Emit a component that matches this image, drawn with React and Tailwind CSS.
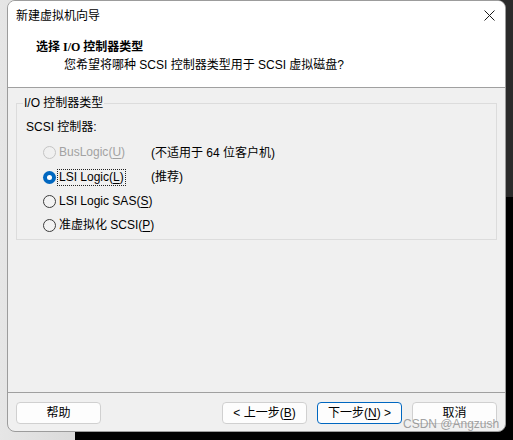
import React from "react";

const FONT = { fontFamily: '"Liberation Sans", "Noto Sans CJK SC", sans-serif' };

function Radio({ state }) {
  if (state === "checked") {
    return (
      <span className="flex h-[13px] w-[13px] shrink-0 items-center justify-center rounded-full bg-[#0067c0]">
        <span className="h-[5px] w-[5px] rounded-full bg-white" />
      </span>
    );
  }
  if (state === "disabled") {
    return <span className="h-[13px] w-[13px] shrink-0 rounded-full border border-[#c4c4c4] bg-[#f0f0f0]" />;
  }
  return <span className="h-[13px] w-[13px] shrink-0 rounded-full border border-[#3c3c3c] bg-[#f3f3f3]" />;
}

function Row({ state, label, mn, note, focus, h }) {
  const disabled = state === "disabled";
  return (
    <div className={`flex items-center whitespace-nowrap pl-[26px] ${h}`}>
      <Radio state={state} />
      <div className="ml-[1px] flex w-[94px] shrink-0 items-center">
        <span
          className={`whitespace-nowrap px-[2px] leading-[17px] ${disabled ? "text-[#a2a2a2]" : "text-black"} ${
            focus ? "outline outline-1 outline-dotted outline-[#222] -outline-offset-1" : ""
          }`}
        >
          {label}(<span className="underline underline-offset-2">{mn}</span>)
        </span>
      </div>
      {note && <span className="whitespace-nowrap text-black">{note}</span>}
    </div>
  );
}

function Btn({ children, primary }) {
  return (
    <div
      className={`flex h-[22px] w-[85px] items-center justify-center whitespace-nowrap rounded-[4px] border bg-[#fdfdfd] text-[12px] text-black ${
        primary ? "border-[#0067c0]" : "border-[#d0d0d0]"
      }`}
    >
      {children}
    </div>
  );
}

export default function App() {
  return (
    <div className="relative h-[440px] w-[513px] overflow-hidden bg-black text-[12px]" style={FONT}>
      {/* desktop background */}
      <div className="absolute left-0 top-0 h-[440px] w-[75px] bg-gradient-to-r from-[#e6e6e6] to-[#dadada]" />
      <div className="absolute right-0 top-0 h-[197px] w-[12px] bg-[#2b2b2b]" />

      {/* dialog window */}
      <div className="absolute left-[7px] top-0 flex h-[432px] w-[499px] flex-col overflow-hidden rounded-[8px] border border-[#9c9c9c] bg-[#f0f0f0]">
        {/* header */}
        <div className="flex flex-col border-b border-[#a0a0a0] bg-white">
          <div className="flex h-[29px] items-center justify-between pl-[8px] pr-[10px]">
            <span className="text-black">新建虚拟机向导</span>
            <svg width="11" height="11" viewBox="0 0 11 11" className="text-[#1a1a1a]">
              <path d="M0.5 0.5 L10.5 10.5 M10.5 0.5 L0.5 10.5" stroke="currentColor" strokeWidth="1" fill="none" />
            </svg>
          </div>
          <div className="flex flex-col pb-[13px] pt-[8px]">
            <div
              className="h-[18px] pl-[28px] font-bold leading-[18px] text-black"
              style={{ fontFamily: '"Liberation Serif", "Noto Sans CJK SC", serif' }}
            >
              选择 I/O 控制器类型
            </div>
            <div className="h-[18px] pl-[56px] leading-[18px] text-black">
              您希望将哪种 SCSI 控制器类型用于 SCSI 虚拟磁盘?
            </div>
          </div>
        </div>

        {/* body */}
        <div className="flex-1 px-[8px] pt-[15px]">
          <div className="relative h-[137px] border border-[#dcdcdc]">
            <span className="absolute -top-[9px] left-[6px] bg-[#f0f0f0] px-[1px] leading-[16px] text-black">
              I/O 控制器类型
            </span>
            <div className="flex flex-col pt-[15px]">
              <div className="h-[16px] pl-[9px] leading-[16px] text-black">SCSI 控制器:</div>
              <div className="h-[5px]" />
              <Row state="disabled" label="BusLogic" mn="U" note="(不适用于 64 位客户机)" h="h-[25px]" />
              <Row state="checked" label="LSI Logic" mn="L" note="(推荐)" focus h="h-[24px]" />
              <Row state="off" label="LSI Logic SAS" mn="S" h="h-[24px]" />
              <Row state="off" label="准虚拟化 SCSI" mn="P" h="h-[25px]" />
            </div>
          </div>
        </div>

        {/* footer */}
        <div className="flex h-[39px] items-start justify-between border-t border-[#a0a0a0] px-[8px] pt-[9px]">
          <Btn>帮助</Btn>
          <div className="flex gap-[10px]">
            <Btn>
              &lt; 上一步(<span className="underline underline-offset-2">B</span>)
            </Btn>
            <Btn primary>
              下一步(<span className="underline underline-offset-2">N</span>) &gt;
            </Btn>
            <Btn>取消</Btn>
          </div>
        </div>
      </div>

      {/* watermark */}
      <span className="absolute left-[403px] top-[416px] text-[12px] leading-[16px] text-[#8a8a8a]/80">
        CSDN @Angzush
      </span>
    </div>
  );
}
